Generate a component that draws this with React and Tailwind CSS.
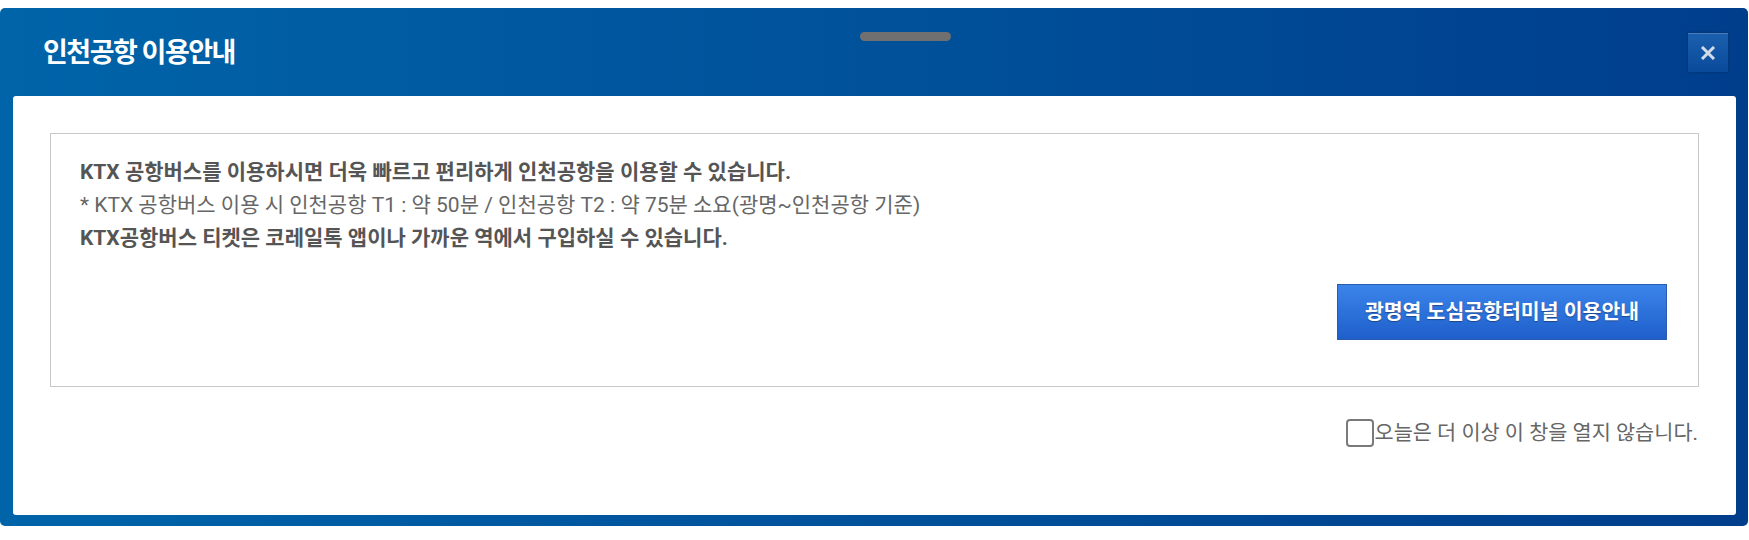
import React from "react";

export default function App() {
  const font = { fontFamily: 'Roboto, "Noto Sans CJK KR", "Noto Sans", sans-serif' };
  return (
    <div className="w-full h-[540px] bg-white pt-[8px]" style={font}>
      <div className="relative w-[1748px] h-[518px] rounded-[5px] bg-gradient-to-r from-[#0064a9] to-[#003e8c] flex flex-col">
        {/* drag handle */}
        <div className="absolute left-[860px] top-[24px] w-[91px] h-[9px] rounded-full bg-[#707070]" />
        {/* header */}
        <div className="h-[88px] flex items-start">
          <div className="pl-[43px] pt-[25px] text-[27px] leading-[40px] font-bold text-white tracking-[-1.5px]">
            인천공항 이용안내
          </div>
          <button className="ml-auto mr-[20px] mt-[25px] w-[40px] h-[39px] flex items-center justify-center bg-gradient-to-b from-[#1a5fae] to-[#0a4a9a] border-t border-[#4a7cbc] shadow-[0_0_3px_rgba(0,0,0,0.25)]">
            <svg width="16" height="14" viewBox="0 0 16 14">
              <path d="M2 1 L14 13 M14 1 L2 13" stroke="#d3dbe8" strokeWidth="3" strokeLinecap="butt" />
            </svg>
          </button>
        </div>
        {/* white panel */}
        <div className="ml-[13px] mr-[12px] h-[419px] bg-white rounded-[3px] px-[37px] pt-[37px]">
          <div className="h-[254px] border border-[#c9c9c9] flex flex-col pl-[29px] pr-[31px] pt-[22px]">
            <div className="text-[21px] leading-[33px] text-[#555555]">
              <p className="font-bold">KTX 공항버스를 이용하시면 더욱 빠르고 편리하게 인천공항을 이용할 수 있습니다.</p>
              <p className="text-[#666666]">* KTX 공항버스 이용 시 인천공항 T1 : 약 50분 / 인천공항 T2 : 약 75분 소요(광명~인천공항 기준)</p>
              <p className="font-bold">KTX공항버스 티켓은 코레일톡 앱이나 가까운 역에서 구입하실 수 있습니다.</p>
            </div>
            <div className="mt-[29px] self-end">
              <button className="w-[330px] h-[56px] bg-gradient-to-b from-[#3b84ea] to-[#1f5fcb] border border-[#2a5bb0] text-white font-bold text-[20.5px] [text-shadow:0_1px_1px_rgba(0,0,0,0.35)]">
                광명역 도심공항터미널 이용안내
              </button>
            </div>
          </div>
          <div className="mt-[32px] flex justify-end items-center pr-[1px]">
            <label className="flex items-center text-[20.8px] leading-[28px] text-[#666666]">
              <span className="w-[28px] h-[28px] rounded-[4px] border-2 border-[#7a7a7a] mr-[1px]" />
              오늘은 더 이상 이 창을 열지 않습니다.
            </label>
          </div>
        </div>
      </div>
    </div>
  );
}
